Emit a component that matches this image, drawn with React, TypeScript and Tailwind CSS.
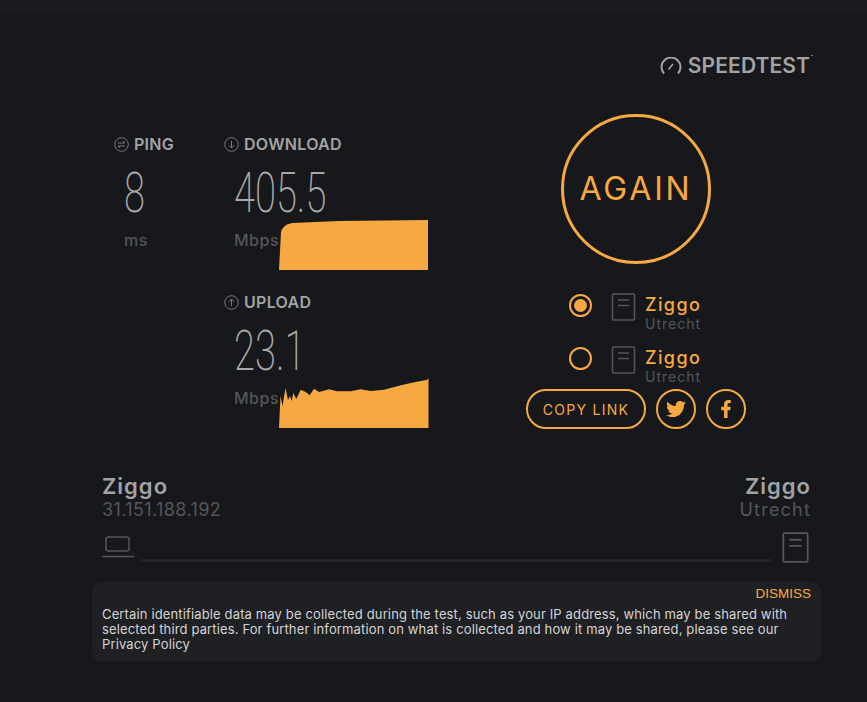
import { FaTwitter, FaFacebookF } from "react-icons/fa"

const amber = "#f7a941"

function CircleIcon({ kind }: { kind: "ping" | "down" | "up" }) {
  return (
    <svg width="15" height="15" viewBox="0 0 15 15" fill="none" stroke="#77787a" strokeWidth="1">
      <circle cx="7.5" cy="7.5" r="6.8" />
      {kind === "ping" && <path d="M4 6h7L9 4M11 9H4l2 2" />}
      {kind === "down" && <path d="M7.5 3.800v7.200M4.800 8.200l2.700 2.800 2.700-2.800" />}
      {kind === "up" && <path d="M7.5 11.200V4M4.800 6.800L7.500 4l2.700 2.800" />}
    </svg>
  )
}

function ServerIcon({ w, h }: { w: number; h: number }) {
  return (
    <svg width={w} height={h} viewBox="0 0 24 28" fill="none" stroke="#55565a" strokeWidth="1.6">
      <rect x="1" y="1" width="22" height="26" rx="1" />
      <path d="M6.5 7h11M6.5 12.500h11" />
    </svg>
  )
}

function Chart({ d }: { d: string }) {
  return (
    <svg className="absolute left-[45px] top-0" width="150" height="50" viewBox="0 0 150 50">
      <path d={d} fill={amber} />
    </svg>
  )
}

function Metric({ kind, label, value, path }: { kind: "down" | "up"; label: string; value: string; path: string }) {
  return (
    <div className="flex flex-col">
      <div className="flex items-center gap-[5px] h-5">
        <CircleIcon kind={kind} />
        <span className="text-[16px] font-semibold text-[#a3a3a3] tracking-[0.3px]">{label}</span>
      </div>
      <div className="ml-[10px] mt-[14px] h-[50px] text-[56px] leading-[50px] font-extralight text-[#a8a8a8] origin-left scale-x-[0.68] font-['Roboto',sans-serif] whitespace-nowrap">
        {value}
      </div>
      <div className="relative ml-[10px] h-[50px] mt-[2px]">
        <span className="text-[16px] leading-[41px] font-medium text-[#55565a] tracking-[0.5px]">Mbps</span>
        <Chart d={path} />
      </div>
    </div>
  )
}

function Server({ selected }: { selected?: boolean }) {
  return (
    <div className="flex items-start h-[53px]">
      <div className="mt-[1px] w-[23px] h-[23px] rounded-full border-2 border-[#f7a941] flex items-center justify-center">
        {selected && <div className="w-[13px] h-[13px] rounded-full bg-[#f7a941]" />}
      </div>
      <div className="ml-[19px]">
        <ServerIcon w={25} h={28} />
      </div>
      <div className="ml-[9px] flex flex-col">
        <span className="text-[18px] leading-[24px] font-medium tracking-[1.4px] text-[#f7a941]">Ziggo</span>
        <span className="text-[14px] leading-[14px] tracking-[1px] text-[#55565a]">Utrecht</span>
      </div>
    </div>
  )
}

export default function App() {
  return (
    <div className="w-[867px] h-[702px] overflow-hidden bg-[#17181c] font-['Inter',sans-serif]">
      <div className="h-3 bg-[#1b1c20]" />

      {/* Logo */}
      <div className="flex justify-end items-center gap-[6px] pr-[57px] mt-[42px] h-6">
        <svg width="22" height="18" viewBox="0 0 22 18" fill="none" stroke="#a3a3a3" strokeWidth="2">
          <path d="M4 16.5A9.5 9.5 0 1 1 18 16.5" />
          <path d="M8.5 12.5L13 7" strokeWidth="1.6" />
        </svg>
        <span className="relative text-[21px] font-semibold text-[#a3a3a3] tracking-[0.1px]">
          SPEEDTEST
          <span className="absolute -right-[3px] top-[5px] w-[2px] h-[1px] bg-[#77787a]" />
        </span>
      </div>

      {/* Results */}
      <div className="flex mt-[36px] h-[336px]">
        <div className="ml-[114px] w-[110px] pt-[20px]">
          <div className="flex items-center gap-[5px] h-5">
            <CircleIcon kind="ping" />
            <span className="text-[16px] font-semibold text-[#a3a3a3] tracking-[0.3px]">PING</span>
          </div>
          <div className="ml-[10px] mt-[14px] h-[50px] text-[56px] leading-[50px] font-extralight text-[#a8a8a8] origin-left scale-x-[0.68] font-['Roboto',sans-serif]">
            8
          </div>
          <div className="ml-[10px] mt-[2px] text-[16px] leading-[41px] font-medium text-[#55565a] tracking-[0.5px]">ms</div>
        </div>

        <div className="w-[205px] pt-[20px] flex flex-col gap-[22px]">
          <Metric
            kind="down"
            label="DOWNLOAD"
            value="405.5"
            path="M0 50L2 12Q4 4.500 13 3L60 1L149 0V50Z"
          />
          <Metric
            kind="up"
            label="UPLOAD"
            value="23.1"
            path="M0 50L1.500 18L3.500 28L6.500 10L9 22L11 18L12.700 23L14.300 15L17.300 21L21.700 11.700L26.700 14L30.700 17.300L35 10.700L40 14L44 13L50 11.300L58 13.300L71.700 13.300L81.700 11.300L91.700 13L105 11.700L118 8.300L131.700 5L148.300 1.700L149.500 0V50Z"
          />
        </div>

        <div className="ml-[97px] w-[222px] flex flex-col items-center">
          <div className="ml-[-2px] w-[150px] h-[150px] rounded-full border-[3px] border-[#f7a941] flex items-center justify-center">
            <span className="text-[32px] font-normal text-[#f7a941] tracking-[2.8px]">AGAIN</span>
          </div>
          <div className="mt-[29px] self-start ml-[43px]">
            <Server selected />
            <Server />
          </div>
          <div className="-mt-[10px] self-start flex items-center">
            <div className="w-[120px] h-10 rounded-full border-2 border-[#f7a941] flex items-center justify-center text-[14px] tracking-[1.3px] text-[#f7a941]">
              COPY LINK
            </div>
            <div className="ml-[10px] w-10 h-10 rounded-full border-2 border-[#f7a941] flex items-center justify-center text-[#f7a941] text-[20px]">
              <FaTwitter />
            </div>
            <div className="ml-[10px] w-10 h-10 rounded-full border-2 border-[#f7a941] flex items-center justify-center text-[#f7a941] text-[18px]">
              <FaFacebookF />
            </div>
          </div>
        </div>
      </div>

      {/* Connection */}
      <div className="mt-[23px] ml-[102px] w-[709px]">
        <div className="flex justify-between">
          <div className="flex flex-col">
            <span className="text-[22px] leading-[26px] font-semibold text-[#a3a3a3] tracking-[1px]">Ziggo</span>
            <span className="text-[18px] leading-[21px] text-[#55565a] tracking-[0.4px]">31.151.188.192</span>
          </div>
          <div className="flex flex-col items-end">
            <span className="text-[22px] leading-[26px] font-semibold text-[#a3a3a3] tracking-[1px]">Ziggo</span>
            <span className="text-[18px] leading-[21px] text-[#55565a] tracking-[1.2px]">Utrecht</span>
          </div>
        </div>
        <div className="flex items-end mt-[11px] h-[32px]">
          <svg width="32" height="22" viewBox="0 0 32 22" fill="none" stroke="#55565a" strokeWidth="1.5" className="mb-[5px]">
            <rect x="4" y="1" width="23" height="14" rx="2.500" />
            <path d="M0 20.500h32" />
          </svg>
          <div className="ml-[7px] w-[630px] h-[3px] mb-[1px] bg-[#24252b]" />
          <div className="ml-[11px]">
            <ServerIcon w={27} h={31} />
          </div>
        </div>
      </div>

      {/* Notice */}
      <div className="mt-[19px] ml-[92px] w-[729px] h-[80px] rounded-[10px] bg-[#1f2024] px-[10px]">
        <div className="text-right text-[13.5px] leading-[18px] pt-[3px] font-['Liberation_Sans',sans-serif] text-[#f7a941]">DISMISS</div>
        <div className="mt-[4px] text-[13px] leading-[15px] text-[#d4d4d4] whitespace-nowrap tracking-[0.14px]">
          <div>Certain identifiable data may be collected during the test, such as your IP address, which may be shared with</div>
          <div>selected third parties. For further information on what is collected and how it may be shared, please see our</div>
          <div>Privacy Policy</div>
        </div>
      </div>
    </div>
  )
}
